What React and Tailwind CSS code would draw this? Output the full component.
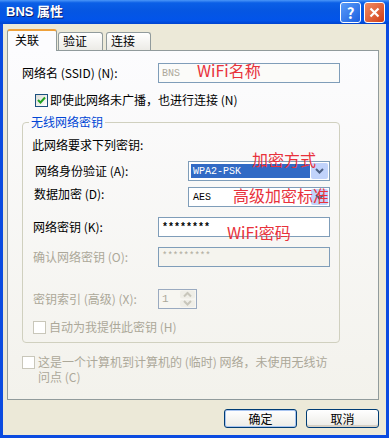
import React from 'react';

const cn = "font-[family-name:'Noto_Sans_CJK_SC',sans-serif]";
const mono = "font-[family-name:'Liberation_Mono',monospace]";

const Chevron = ({ color = '#4d6185' }) => (
  <svg width="9" height="6" viewBox="0 0 9 6">
    <path d="M1 1 L4.5 4.5 L8 1" fill="none" stroke={color} strokeWidth="2" />
  </svg>
);

const CheckBox = ({ checked = false, disabled = false }) => (
  <div
    className={`w-[13px] h-[13px] shrink-0 border flex items-center justify-center ${
      disabled ? 'border-[#c9c7ba] bg-white' : 'border-[#1c5180] bg-gradient-to-br from-[#dcdcd7] to-white'
    }`}
  >
    {checked && (
      <svg width="9" height="9" viewBox="0 0 9 9">
        <path d="M1 4 L3.5 6.5 L8 1.5" fill="none" stroke="#21a121" strokeWidth="2" />
      </svg>
    )}
  </div>
);

const Tab = ({ label, active }) =>
  active ? (
    <div className="w-[50px] h-[22px] bg-[#fcfcfe] border-x border-[#919b9c] border-t-[2px] border-t-[#eea13b] rounded-t-[3px] pl-[7px] pt-[1px] leading-[16px]">
      {label}
    </div>
  ) : (
    <div className="w-[45px] h-[18px] mb-[1px] bg-gradient-to-b from-white to-[#ecebe6] border-x border-t border-[#919b9c] rounded-t-[3px] pl-[4px] leading-[16px]">
      {label}
    </div>
  );

const Button = ({ label, primary }) => (
  <div
    className={`w-[73px] h-[19px] rounded-[3px] border border-[#003c74] bg-gradient-to-b from-white to-[#ecebe6] flex items-center justify-center text-black ${
      primary ? 'shadow-[inset_0_0_0_1px_#a8c4f0]' : 'shadow-[inset_0_-2px_0_#d6d0c5]'
    }`}
  >
    {label}
  </div>
);

const Red = ({ className, children }) => (
  <span className={`absolute text-[16px] leading-[16px] text-[#e8323c] whitespace-nowrap ${className}`}>{children}</span>
);

export default function App() {
  return (
    <div className={`w-[389px] h-[438px] overflow-hidden flex flex-col text-[12px] text-black ${cn}`}>
      {/* title bar */}
      <div className="h-[24px] shrink-0 flex items-center pl-[6px] pr-[4px] bg-[linear-gradient(to_bottom,#4b96f8_0%,#0b5fe6_12%,#0556e2_45%,#0254ea_85%,#0044cf_100%)]">
        <span className="text-white font-bold text-[13px] [text-shadow:1px_1px_0_#0a1e6e] font-[family-name:'Liberation_Sans','Noto_Sans_CJK_SC',sans-serif]">
          BNS&nbsp;属性
        </span>
        <div className="ml-auto flex gap-[3px]">
          <div className="w-[21px] h-[21px] rounded-[3px] border border-white bg-gradient-to-br from-[#5a9cf8] to-[#1b5ee0] flex items-center justify-center text-white font-bold text-[15px] leading-none">
            ?
          </div>
          <div className="w-[21px] h-[21px] rounded-[3px] border border-white bg-gradient-to-br from-[#f08a62] to-[#d03c10] flex items-center justify-center">
            <svg width="11" height="11" viewBox="0 0 11 11">
              <path d="M1.5 1.5 L9.5 9.5 M9.5 1.5 L1.5 9.5" stroke="white" strokeWidth="2.2" />
            </svg>
          </div>
        </div>
      </div>

      {/* window body */}
      <div className="flex-1 bg-[#ece9d8] border-x-[3px] border-b-[3px] border-[#0b4be0] pl-[4px] pt-[5px]">
        <div className="relative z-10 flex items-end gap-[1px] h-[22px]">
          <Tab label="关联" active />
          <Tab label="验证" />
          <div className="w-[1px]" />
          <Tab label="连接" />
        </div>

        <div className="relative -mt-[1px] w-[372px] h-[350px] border border-[#919b9c] bg-gradient-to-b from-[#fcfcfe] to-[#f3f2ec] pl-[14px] pt-[12px]">
          <div className="flex items-center h-[20px]">
            <span className="w-[136px]">网络名 (SSID) (N):</span>
            <div className={`w-[182px] h-[20px] border border-[#7f9db9] bg-[#fbfbf9] flex items-center pl-[3px] text-[#aca899] text-[10px] ${mono}`}>
              BNS
            </div>
          </div>

          <div className="flex items-center gap-[2px] ml-[13px] mt-[8px]">
            <CheckBox checked />
            <span>即使此网络未广播，也进行连接 (N)</span>
          </div>

          <fieldset className="mt-[5px] w-[318px] h-[229px] border border-[#d0d0bf] rounded-[4px]">
            <legend className="ml-[6px] px-[2px] leading-[16px] text-[#0046d5]">无线网络密钥</legend>
            <div className="pl-[9px] pt-[7px] flex flex-col">
              <span className="leading-[16px]">此网络要求下列密钥:</span>

              <div className="flex items-center h-[20px] mt-[8px]">
                <span className="ml-[3px] w-[153px]">网络身份验证 (A):</span>
                <div className="w-[142px] h-[20px] border border-[#7f9db9] bg-white flex p-[1px] gap-[1px]">
                  <div className={`flex-1 bg-[#316ac5] text-white text-[10px] flex items-center pl-[2px] my-[1px] ml-[1px] ${mono}`}>
                    WPA2-PSK
                  </div>
                  <div className="w-[17px] bg-[#c1d3fb] rounded-[2px] flex items-center justify-center">
                    <Chevron />
                  </div>
                </div>
              </div>

              <div className="flex items-center h-[20px] mt-[6px]">
                <span className="ml-[2px] w-[154px] mb-[6px]">数据加密 (D):</span>
                <div className="w-[142px] h-[20px] border border-[#7f9db9] bg-white flex p-[1px] gap-[1px]">
                  <div className={`flex-1 text-[10px] flex items-center pl-[3px] ${mono}`}>AES</div>
                  <div className="w-[17px] bg-[#c1d3fb] rounded-[2px] flex items-center justify-center">
                    <Chevron />
                  </div>
                </div>
              </div>

              <div className="flex items-center h-[20px] mt-[10px]">
                <span className="ml-[1px] w-[125px]">网络密钥 (K):</span>
                <div className={`w-[172px] h-[20px] border border-[#7f9db9] bg-white flex items-center pl-[3px] text-[10px] font-bold ${mono}`}>
                  ********
                </div>
              </div>

              <div className="flex items-center h-[20px] mt-[10px] text-[#aca899]">
                <span className="ml-[1px] w-[125px]">确认网络密钥 (O):</span>
                <div className={`w-[172px] h-[20px] border border-[#7f9db9] bg-[#f5f4ee] flex items-center pl-[3px] text-[9px] ${mono}`}>
                  *********
                </div>
              </div>

              <div className="flex items-center h-[20px] mt-[22px] text-[#aca899]">
                <span className="ml-[1px] w-[125px]">密钥索引 (高级) (X):</span>
                <div className="w-[39px] h-[20px] border border-[#9aaac0] bg-[#f7f6f1] flex p-[1px]">
                  <span className={`flex-1 flex items-center pl-[2px] text-[11px] ${mono}`}>1</span>
                  <div className="w-[15px] flex flex-col gap-[1px]">
                    <div className="flex-1 bg-[#efeee7] rounded-[2px] flex items-center justify-center rotate-180">
                      <Chevron color="#c8c6bb" />
                    </div>
                    <div className="flex-1 bg-[#efeee7] rounded-[2px] flex items-center justify-center">
                      <Chevron color="#c8c6bb" />
                    </div>
                  </div>
                </div>
              </div>

              <div className="flex items-center gap-[3px] ml-[1px] mt-[9px] text-[#aca899]">
                <CheckBox disabled />
                <span>自动为我提供此密钥 (H)</span>
              </div>
            </div>
          </fieldset>

          <div className="flex items-start gap-[3px] mt-[11px] text-[#aca899] leading-[15px]">
            <div className="mt-[2px]">
              <CheckBox disabled />
            </div>
            <span>
              这是一个计算机到计算机的 (临时) 网络，未使用无线访
              <br />
              问点 (C)
            </span>
          </div>

          <Red className="left-[189px] top-[11px]">WiFi名称</Red>
          <Red className="left-[244px] top-[100px]">加密方式</Red>
          <Red className="left-[225px] top-[136px]">高级加密标准</Red>
          <Red className="left-[219px] top-[173px]">WiFi密码</Red>
        </div>

        <div className="w-[372px] flex justify-end gap-[9px] mt-[9px]">
          <Button label="确定" primary />
          <Button label="取消" />
        </div>
      </div>
    </div>
  );
}
